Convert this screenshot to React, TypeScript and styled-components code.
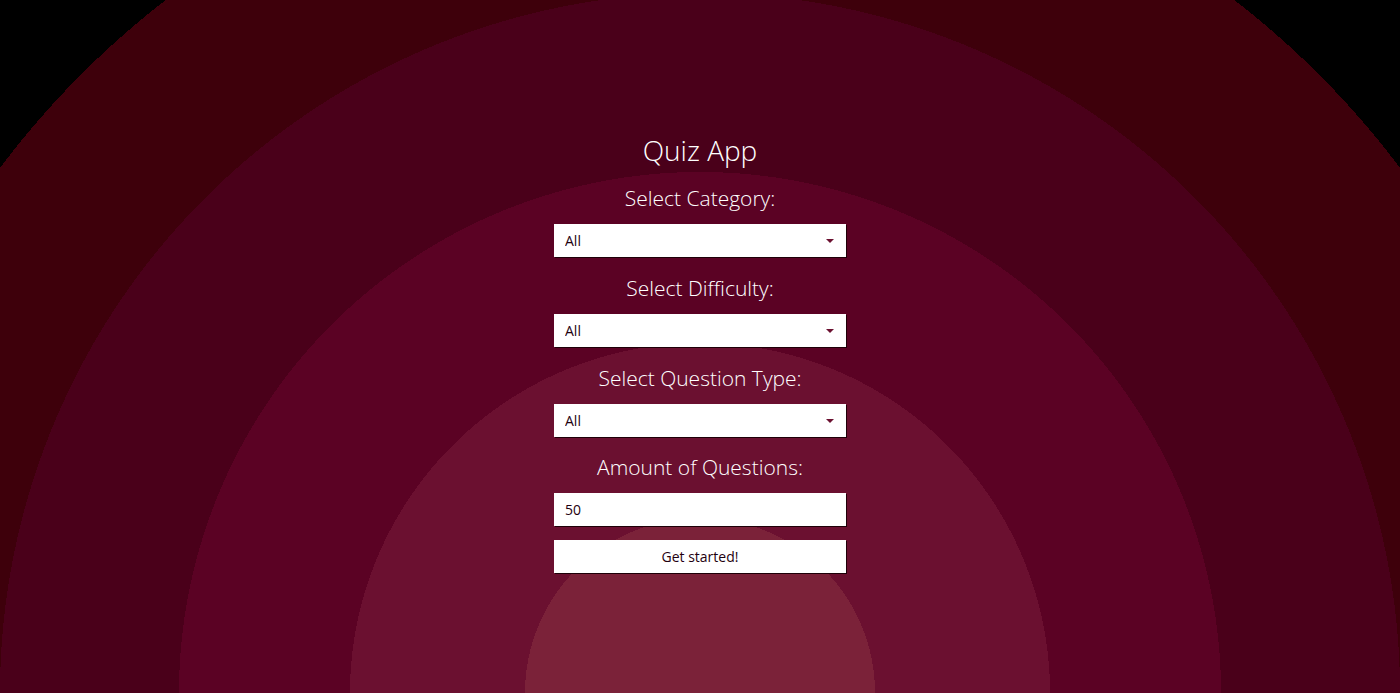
import React from "react";
import styled, { createGlobalStyle } from "styled-components";

const GlobalStyle = createGlobalStyle`
  html, body { margin: 0; padding: 0; background: #000; }
  * { box-sizing: border-box; }
`;

const Page = styled.div`
  min-height: 100vh;
  width: 100%;
  background: radial-gradient(
    circle at 50% 100%,
    #7b2239 0 175px,
    #6b1030 175px 350px,
    #5b0224 350px 521px,
    #4a001a 521px 700px,
    #3e000b 700px 875px,
    #000 875px
  );
  display: flex;
  flex-direction: column;
  align-items: center;
  padding-top: 132px;
  font-family: "Open Sans", "Noto Sans", sans-serif;
`;

const Title = styled.h1`
  margin: 0 0 15px;
  font-size: 28px;
  line-height: 36px;
  font-weight: 300;
  color: #fff;
`;

const Form = styled.form`
  width: 292px;
  display: flex;
  flex-direction: column;
  align-items: stretch;
`;

const Group = styled.div<{ $gap: number }>`
  display: flex;
  flex-direction: column;
  align-items: stretch;
  margin-bottom: ${(p) => p.$gap}px;
`;

const Label = styled.label`
  display: block;
  text-align: center;
  font-size: 21px;
  line-height: 30px;
  font-weight: 300;
  color: #fff;
  margin-bottom: 11px;
  white-space: nowrap;
`;

const SelectWrap = styled.div`
  position: relative;
  &::after {
    content: "";
    position: absolute;
    right: 12px;
    top: 15px;
    border-left: 4px solid transparent;
    border-right: 4px solid transparent;
    border-top: 4px solid #6b1030;
    pointer-events: none;
  }
`;

const fieldBase = `
  display: block;
  width: 100%;
  height: 33px;
  border: none;
  margin: 0;
  background: #fff;
  box-shadow: 1px 1px 0 #1e0008;
  font-family: "Open Sans", "Noto Sans", sans-serif;
  font-size: 14px;
  font-weight: 500;
  color: #1f0010;
  outline: none;
`;

const Select = styled.select`
  ${fieldBase}
  appearance: none;
  -webkit-appearance: none;
  padding: 0 24px 0 11px;
  border-radius: 0;
`;

const Input = styled.input`
  ${fieldBase}
  padding: 0 11px;
`;

const Button = styled.button`
  ${fieldBase}
  cursor: pointer;
  text-align: center;
  padding: 0;
`;

export default function App() {
  return (
    <>
      <GlobalStyle />
      <Page>
        <Title>Quiz App</Title>
        <Form onSubmit={(e) => e.preventDefault()}>
          <Group $gap={16}>
            <Label htmlFor="cat">Select Category:</Label>
            <SelectWrap>
              <Select id="cat" defaultValue="all">
                <option value="all">All</option>
              </Select>
            </SelectWrap>
          </Group>
          <Group $gap={16}>
            <Label htmlFor="diff">Select Difficulty:</Label>
            <SelectWrap>
              <Select id="diff" defaultValue="all">
                <option value="all">All</option>
              </Select>
            </SelectWrap>
          </Group>
          <Group $gap={15}>
            <Label htmlFor="type">Select Question Type:</Label>
            <SelectWrap>
              <Select id="type" defaultValue="all">
                <option value="all">All</option>
              </Select>
            </SelectWrap>
          </Group>
          <Group $gap={14}>
            <Label htmlFor="amount">Amount of Questions:</Label>
            <Input id="amount" type="number" defaultValue={50} />
          </Group>
          <Button type="submit">Get started!</Button>
        </Form>
      </Page>
    </>
  );
}
